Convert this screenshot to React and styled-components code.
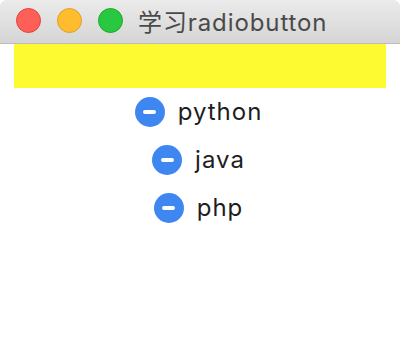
import React from "react";
import styled, { createGlobalStyle } from "styled-components";

const GlobalStyle = createGlobalStyle`
  html, body {
    margin: 0;
    padding: 0;
    background: #ffffff;
  }
  body {
    font-family: Inter, "Noto Sans CJK SC", "Liberation Sans", sans-serif;
  }
`;

const languages = ["python", "java", "php"];

export default function App() {
  return (
    <>
      <GlobalStyle />
      <StyledWindow>
        <StyledTitleBar>
          <StyledLights>
            <StyledLight color="#fe5f57" border="#e0443e" />
            <StyledLight color="#febc2e" border="#dea123" />
            <StyledLight color="#28c840" border="#1aab29" />
          </StyledLights>
          <StyledTitle>学习radiobutton</StyledTitle>
        </StyledTitleBar>
        <StyledContent>
          <StyledBanner />
          <StyledList>
            {languages.map((name) => (
              <StyledRadio key={name}>
                <StyledDot>
                  <StyledDash />
                </StyledDot>
                <StyledLabel>{name}</StyledLabel>
              </StyledRadio>
            ))}
          </StyledList>
        </StyledContent>
      </StyledWindow>
    </>
  );
}

const StyledWindow = styled.div`
  width: 400px;
  height: 344px;
  display: flex;
  flex-direction: column;
  background: #ffffff;
  border-radius: 6px;
  overflow: hidden;
`;

const StyledTitleBar = styled.div`
  height: 43px;
  display: flex;
  align-items: center;
  padding-left: 16px;
  background: linear-gradient(#ebebeb, #d5d5d5);
  border-bottom: 1px solid #bdbdbd;
  box-sizing: content-box;
`;

const StyledLights = styled.div`
  display: flex;
  gap: 16px;
  margin-top: -2px;
`;

const StyledLight = styled.div`
  width: 23px;
  height: 23px;
  border-radius: 50%;
  background: ${(p) => p.color};
  border: 0.5px solid ${(p) => p.border};
`;

const StyledTitle = styled.div`
  margin-left: 15px;
  margin-top: -2px;
  font-size: 24px;
  color: #4a4a4a;
  letter-spacing: 0.9px;
`;

const StyledContent = styled.div`
  flex: 1;
  display: flex;
  flex-direction: column;
  padding: 0 14px;
`;

const StyledBanner = styled.div`
  height: 44px;
  background: #fefa32;
`;

const StyledList = styled.div`
  display: flex;
  flex-direction: column;
  align-items: center;
`;

const StyledRadio = styled.div`
  height: 48px;
  display: flex;
  align-items: center;
  gap: 13px;
  margin-left: -3px;
`;

const StyledDot = styled.div`
  width: 30px;
  height: 30px;
  border-radius: 50%;
  background: #3e87f1;
  display: flex;
  align-items: center;
  justify-content: center;
`;

const StyledDash = styled.div`
  width: 13px;
  height: 4px;
  border-radius: 2px;
  background: #ffffff;
`;

const StyledLabel = styled.div`
  font-size: 24px;
  color: #1e1e1e;
  letter-spacing: 1px;
  margin-top: -1px;
`;
